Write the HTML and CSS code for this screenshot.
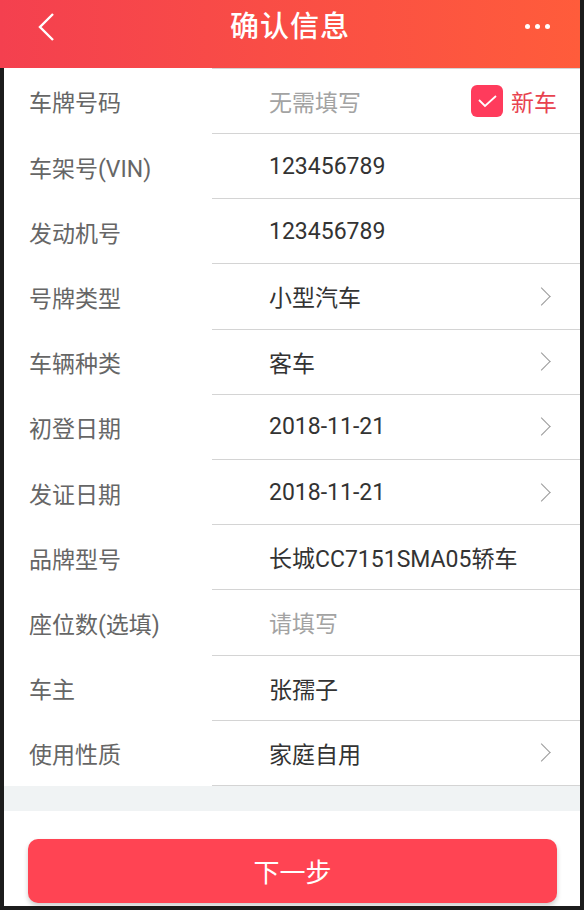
FILE: index.html
```html
<!DOCTYPE html>
<html lang="zh-CN">
<head>
  <meta charset="UTF-8" />
  <title>确认信息</title>
  <link rel="stylesheet" href="styles.css">
</head>
<body>

<div class="screen">
  <header class="topbar">
    <svg class="back" width="18" height="30" viewBox="0 0 18 30">
      <path d="M16 2 L3 15 L16 28" fill="none" stroke="#fff" stroke-width="2.4" />
    </svg>
    <h1>确认信息</h1>
    <div class="more"><span></span><span></span><span></span></div>
  </header>

  <div class="form">
    <div class="row first">
      <div class="label">车牌号码</div>
      <div class="value">
        <span class="placeholder">无需填写</span>
        <span class="newcar">
          <span class="check">
            <svg width="32" height="32" viewBox="0 0 32 32">
              <path d="M8 15 L14 21 L25 11" fill="none" stroke="#fff" stroke-width="1.8" />
            </svg>
          </span>
          新车
        </span>
      </div>
    </div>
    <div class="row">
      <div class="label">车架号(VIN)</div>
      <div class="value">123456789</div>
    </div>
    <div class="row">
      <div class="label">发动机号</div>
      <div class="value">123456789</div>
    </div>
    <div class="row">
      <div class="label">号牌类型</div>
      <div class="value">小型汽车<i class="arrow"></i></div>
    </div>
    <div class="row">
      <div class="label">车辆种类</div>
      <div class="value">客车<i class="arrow"></i></div>
    </div>
    <div class="row">
      <div class="label">初登日期</div>
      <div class="value">2018-11-21<i class="arrow"></i></div>
    </div>
    <div class="row">
      <div class="label">发证日期</div>
      <div class="value">2018-11-21<i class="arrow"></i></div>
    </div>
    <div class="row">
      <div class="label">品牌型号</div>
      <div class="value">长城CC7151SMA05轿车</div>
    </div>
    <div class="row">
      <div class="label">座位数(选填)</div>
      <div class="value"><span class="placeholder">请填写</span></div>
    </div>
    <div class="row">
      <div class="label">车主</div>
      <div class="value">张孺子</div>
    </div>
    <div class="row">
      <div class="label">使用性质</div>
      <div class="value">家庭自用<i class="arrow"></i></div>
    </div>
  </div>

  <div class="gap"></div>

  <div class="footer">
    <button class="next">下一步</button>
  </div>
</div>

</body>
</html>
```

FILE: styles.css
```css
* { box-sizing: border-box; }
body {
  margin: 0;
  background: #1c1c1c;
  font-family: Roboto, "Noto Sans CJK SC", sans-serif;
}
.screen {
  width: 584px;
  height: 910px;
  padding: 0 4px 4px 0;
  display: flex;
  flex-direction: column;
}
.topbar {
  height: 68px;
  flex: none;
  display: flex;
  align-items: center;
  justify-content: space-between;
  padding: 0 30px 20px 37px;
  background: linear-gradient(to right, #f4404f, #ff5c3b);
  color: #fff;
}
.topbar h1 {
  margin: 0;
  font-size: 29px;
  font-weight: 500;
  letter-spacing: 1px;
}
.back {
  display: block;
  margin-top: 6px;
}
.more {
  display: flex;
  gap: 5px;
  margin-top: 4px;
}
.more span {
  width: 5px;
  height: 5px;
  border-radius: 50%;
  background: #fff;
}
.form {
  margin-left: 4px;
  background: #fff;
}
.row {
  display: flex;
  height: 65.2px;
  font-size: 23px;
}
.row.first {
  height: 66px;
}
.label {
  width: 208px;
  padding-left: 25px;
  display: flex;
  align-items: center;
  color: #666;
}
.value {
  flex: 1;
  display: flex;
  align-items: center;
  padding: 0 32px 0 57px;
  border-bottom: 1px solid #d4d4d4;
  color: #333;
}
.row.first .value {
  border-top: 1px solid #d4d4d4;
  padding-right: 23px;
}
.placeholder {
  color: #a3a3a3;
}
.newcar {
  margin-left: auto;
  display: flex;
  align-items: center;
  gap: 8px;
  color: #e8434f;
}
.check {
  width: 32px;
  height: 32px;
  border-radius: 6px;
  background: #ff3b5c;
}
.check svg {
  display: block;
}
.arrow {
  margin-left: auto;
  width: 13px;
  height: 13px;
  border-top: 1.6px solid #9a9a9a;
  border-right: 1.6px solid #9a9a9a;
  transform: rotate(45deg);
}
.gap {
  height: 25px;
  flex: none;
  margin-left: 4px;
  background: #f0f3f4;
}
.footer {
  flex: 1;
  margin-left: 4px;
  background: #fff;
  padding: 28px 23px 0 24px;
}
.next {
  width: 100%;
  height: 64px;
  border: none;
  border-radius: 10px;
  background: #ff4453;
  color: #fff;
  font-family: inherit;
  font-size: 26px;
  box-shadow: 0 3px 5px rgba(0, 0, 0, 0.2);
}
```
